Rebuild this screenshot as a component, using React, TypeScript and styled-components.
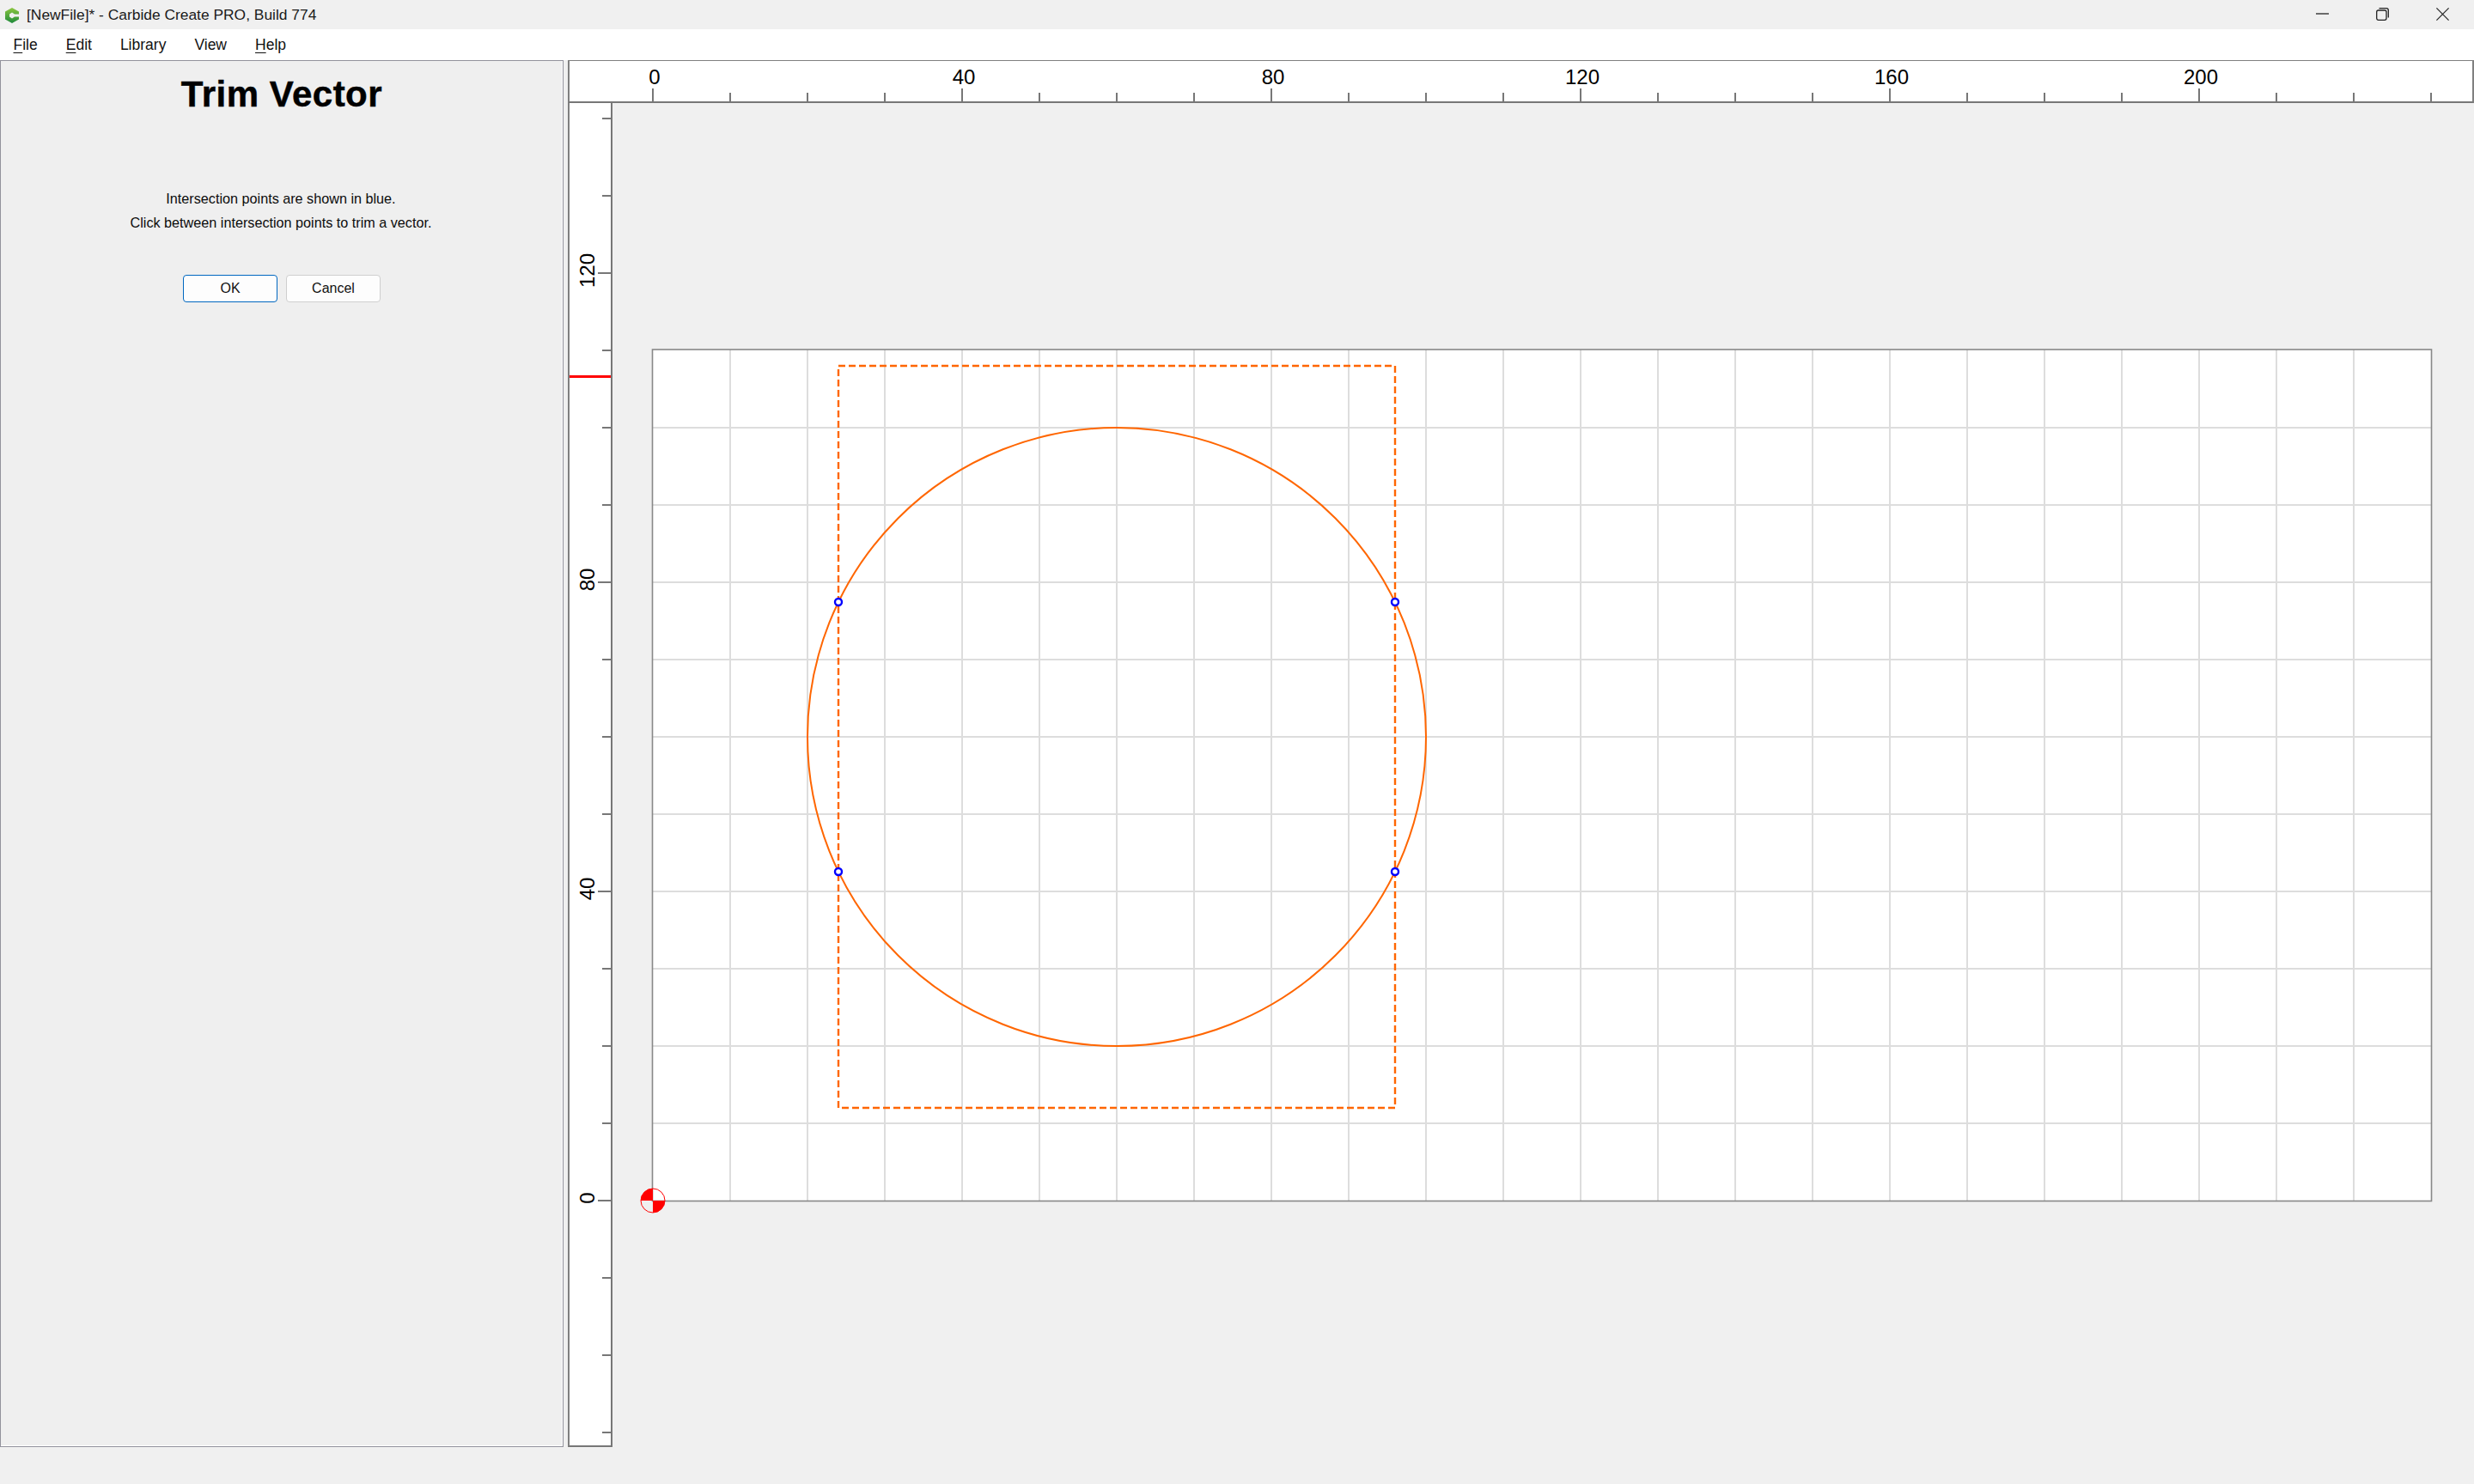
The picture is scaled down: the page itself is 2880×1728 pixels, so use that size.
import React from "react";
import styled, { createGlobalStyle } from "styled-components";

const Global = createGlobalStyle`
  html, body { margin: 0; padding: 0; background: #f0f0f0; }
  #root { width: 2880px; height: 1728px; overflow: hidden; }
`;

const labelFont = `"Liberation Sans", sans-serif`;

const Window = styled.div`
  width: 2880px;
  height: 1728px;
  background: #f0f0f0;
  display: flex;
  flex-direction: column;
  color: #000;
`;

const TitleBar = styled.header`
  height: 34px;
  flex: none;
  display: flex;
  align-items: center;
  padding-left: 6px;
  padding-right: 2px;
  box-sizing: border-box;
  background: #f0f0f0;
`;

const TitleText = styled.span`
  margin-left: 9px;
  font: 17.4px/34px "Liberation Sans", sans-serif;
  color: #1a1a1a;
  flex: 1;
`;

const WindowControl = styled.button`
  width: 70px;
  height: 34px;
  border: 0;
  padding: 0 0 2px;
  background: transparent;
  display: flex;
  align-items: center;
  justify-content: center;
`;

const MenuBar = styled.nav`
  height: 36px;
  flex: none;
  background: #fff;
  display: flex;
  align-items: center;
  gap: 33px;
  padding-left: 15.5px;
`;

const MenuItem = styled.span`
  font: 17.5px/36px "Liberation Sans", sans-serif;
  color: #111;
`;

const Mnemonic = styled.span`
  text-decoration: underline;
  text-underline-offset: 3px;
`;

const Main = styled.main`
  flex: none;
  display: flex;
  height: 1615px;
  gap: 5px;
`;

const Panel = styled.aside`
  width: 656px;
  flex: none;
  box-sizing: border-box;
  background: #efefef;
  border: 1.5px solid #92929c;
  box-shadow: inset 0 -1px 0 #fff, inset -1px 0 0 #fff;
  display: flex;
  flex-direction: column;
  align-items: center;
`;

const PanelTitle = styled.h1`
  margin: 16px 0 0;
  font: 700 42px/46px "Liberation Sans", sans-serif;
  letter-spacing: 0.5px;
  -webkit-text-stroke: 0.5px #000;
`;

const PanelText = styled.p`
  margin: 0;
  font: 16.2px/28px "Liberation Sans", sans-serif;
  color: #0c0c0c;
`;

const TextBlock = styled.div`
  margin-top: 84px;
  padding-right: 2px;
  display: flex;
  flex-direction: column;
  align-items: center;
`;

const ButtonRow = styled.div`
  margin-top: 46.5px;
  display: flex;
  gap: 10px;
`;

const DialogButton = styled.button<{ $primary?: boolean }>`
  width: 110px;
  height: 32px;
  box-sizing: border-box;
  border-radius: 4px;
  background: #fdfdfd;
  border: ${(p) => (p.$primary ? "1.5px solid #0067c0" : "1px solid #cfcfcf")};
  font: 16px "Liberation Sans", sans-serif;
  color: #111;
  padding: 0;
`;

const Workspace = styled.section`
  flex: 1;
  display: grid;
  grid-template-columns: 52px 1fr;
  grid-template-rows: 50px 1fr;
`;

const Corner = styled.div`
  background: #fff;
  box-sizing: border-box;
  border-top: 1px solid #808080;
  border-left: 2px solid #808080;
  border-right: 2px solid #777;
  border-bottom: 2px solid #777;
`;

const HRuler = styled.div`
  position: relative;
  background: #fff;
  box-sizing: border-box;
  border-top: 1px solid #808080;
  border-right: 2px solid #808080;
  border-bottom: 2px solid #777;
  margin-left: -2px;
`;

const VRuler = styled.div`
  position: relative;
  background: #fff;
  box-sizing: border-box;
  border-left: 2px solid #808080;
  border-right: 2px solid #777;
  border-bottom: 2px solid #777;
  height: 1565px;
`;

const HTick = styled.i<{ $major: boolean }>`
  position: absolute;
  bottom: 0;
  width: 2px;
  height: ${(p) => (p.$major ? 15 : 10)}px;
  background: #777;
`;

const VTick = styled.i<{ $major: boolean }>`
  position: absolute;
  right: 0;
  height: 2px;
  width: ${(p) => (p.$major ? 15 : 10)}px;
  background: #777;
`;

const HLabel = styled.span`
  position: absolute;
  top: 5px;
  transform: translateX(-50%);
  font: 24px/28px ${labelFont};
`;

const VLabel = styled.span`
  position: absolute;
  left: 7px;
  transform: translate(0, -50%) rotate(180deg);
  writing-mode: vertical-rl;
  font: 24px/28px ${labelFont};
`;

const Cursor = styled.i`
  position: absolute;
  left: 0;
  right: 0;
  top: 317px;
  height: 3px;
  background: #ff0000;
`;

const Canvas = styled.svg`
  display: block;
  width: 2167px;
  height: 1565px;
`;

const X0 = 760;
const Y0 = 1398;
const U = 9;
const HR = 712;
const hTicks = Array.from({ length: 24 }, (_, i) => i * 10);
const vTicks = Array.from({ length: 18 }, (_, i) => -30 + i * 10);

const gridX = Array.from({ length: 22 }, (_, i) => X0 + 90 * (i + 1));
const gridY = Array.from({ length: 10 }, (_, i) => 498 + 90 * i);
const points: [number, number][] = [
  [976, 701],
  [1624, 701],
  [976, 1015],
  [1624, 1015],
];

function CarbideLogo() {
  return (
    <svg width="16" height="18" viewBox="0 0 16 18" aria-hidden="true" style={{ marginTop: 1 }}>
      <defs>
        <linearGradient id="cc" x1="0" y1="0" x2="0" y2="1">
          <stop offset="0" stopColor="#8cc63f" />
          <stop offset="1" stopColor="#1f8a3c" />
        </linearGradient>
      </defs>
      <path d="M8 0 16 4.5 16 7.5 11 7.5 8 5.5 5 7.5 5 10.5 8 12.5 11 10.5 16 10.5 16 13.5 8 18 0 13.5 0 4.5Z" fill="url(#cc)" />
    </svg>
  );
}

export default function App() {
  return (
    <Window>
      <Global />
      <TitleBar>
        <CarbideLogo />
        <TitleText>[NewFile]* - Carbide Create PRO, Build 774</TitleText>
        <WindowControl aria-label="Minimize">
          <svg width="15" height="2" viewBox="0 0 15 2"><path d="M0 1H15" stroke="#222" strokeWidth="1.3" /></svg>
        </WindowControl>
        <WindowControl aria-label="Restore">
          <svg width="15" height="15" viewBox="0 0 15 15" fill="none" stroke="#222" strokeWidth="1.3">
            <rect x=".7" y="3" width="11.3" height="11.3" rx="2" />
            <path d="M3.5.7H12A2.3 2.3 0 0 1 14.3 3V11.5" />
          </svg>
        </WindowControl>
        <WindowControl aria-label="Close">
          <svg width="15" height="15" viewBox="0 0 15 15"><path d="M.4.4 14.6 14.6M14.6.4.4 14.6" stroke="#222" strokeWidth="1.2" /></svg>
        </WindowControl>
      </TitleBar>
      <MenuBar>
        <MenuItem><Mnemonic>F</Mnemonic>ile</MenuItem>
        <MenuItem><Mnemonic>E</Mnemonic>dit</MenuItem>
        <MenuItem>Library</MenuItem>
        <MenuItem>View</MenuItem>
        <MenuItem><Mnemonic>H</Mnemonic>elp</MenuItem>
      </MenuBar>
      <Main>
        <Panel>
          <PanelTitle>Trim Vector</PanelTitle>
          <TextBlock>
            <PanelText>Intersection points are shown in blue.</PanelText>
            <PanelText>Click between intersection points to trim a vector.</PanelText>
          </TextBlock>
          <ButtonRow>
            <DialogButton $primary>OK</DialogButton>
            <DialogButton>Cancel</DialogButton>
          </ButtonRow>
        </Panel>
        <Workspace>
          <Corner />
          <HRuler>
            {hTicks.map((v) => (
              <React.Fragment key={v}>
                <HTick $major={v % 40 === 0} style={{ left: X0 + v * U - HR }} />
                {v % 40 === 0 && v <= 200 && (
                  <HLabel style={{ left: X0 + v * U - HR + 3 }}>{v}</HLabel>
                )}
              </React.Fragment>
            ))}
          </HRuler>
          <VRuler>
            <Cursor />
            {vTicks.map((v) => {
              const top = Y0 - v * U - 120 - 1;
              return (
                <React.Fragment key={v}>
                  <VTick $major={v % 40 === 0} style={{ top }} />
                  {v % 40 === 0 && v >= 0 && (
                    <VLabel style={{ top: top - 2 }}>{v}</VLabel>
                  )}
                </React.Fragment>
              );
            })}
          </VRuler>
          <Canvas viewBox="713 120 2167 1565">
            <rect x="759.5" y="407" width="2071" height="991.5" fill="#fff" />
            <g stroke="#ddd" strokeWidth="2">
              {gridX.map((x) => <line key={x} x1={x} x2={x} y1={407} y2={1398} />)}
              {gridY.map((y) => <line key={y} x1={760} x2={2830} y1={y} y2={y} />)}
            </g>
            <rect x="759.5" y="407" width="2071" height="991.5" fill="none" stroke="#888" strokeWidth="1.6" />
            <circle cx="1300" cy="858" r="360" fill="none" stroke="#ff6600" strokeWidth="2" />
            <rect x="976" y="426" width="648" height="864" fill="none" stroke="#ff6600" strokeWidth="2.4" strokeDasharray="8 4" />
            {points.map(([x, y]) => (
              <circle key={`${x}-${y}`} cx={x} cy={y} r="4" fill="#fff" stroke="#0000ff" strokeWidth="2.4" />
            ))}
            <path d="M760 1398V1384A14 14 0 0 0 746 1398ZM760 1398V1412A14 14 0 0 0 774 1398Z" fill="#ff0000" />
            <circle cx="760" cy="1398" r="14" fill="none" stroke="#ff0000" strokeWidth="1" />
          </Canvas>
        </Workspace>
      </Main>
    </Window>
  );
}
